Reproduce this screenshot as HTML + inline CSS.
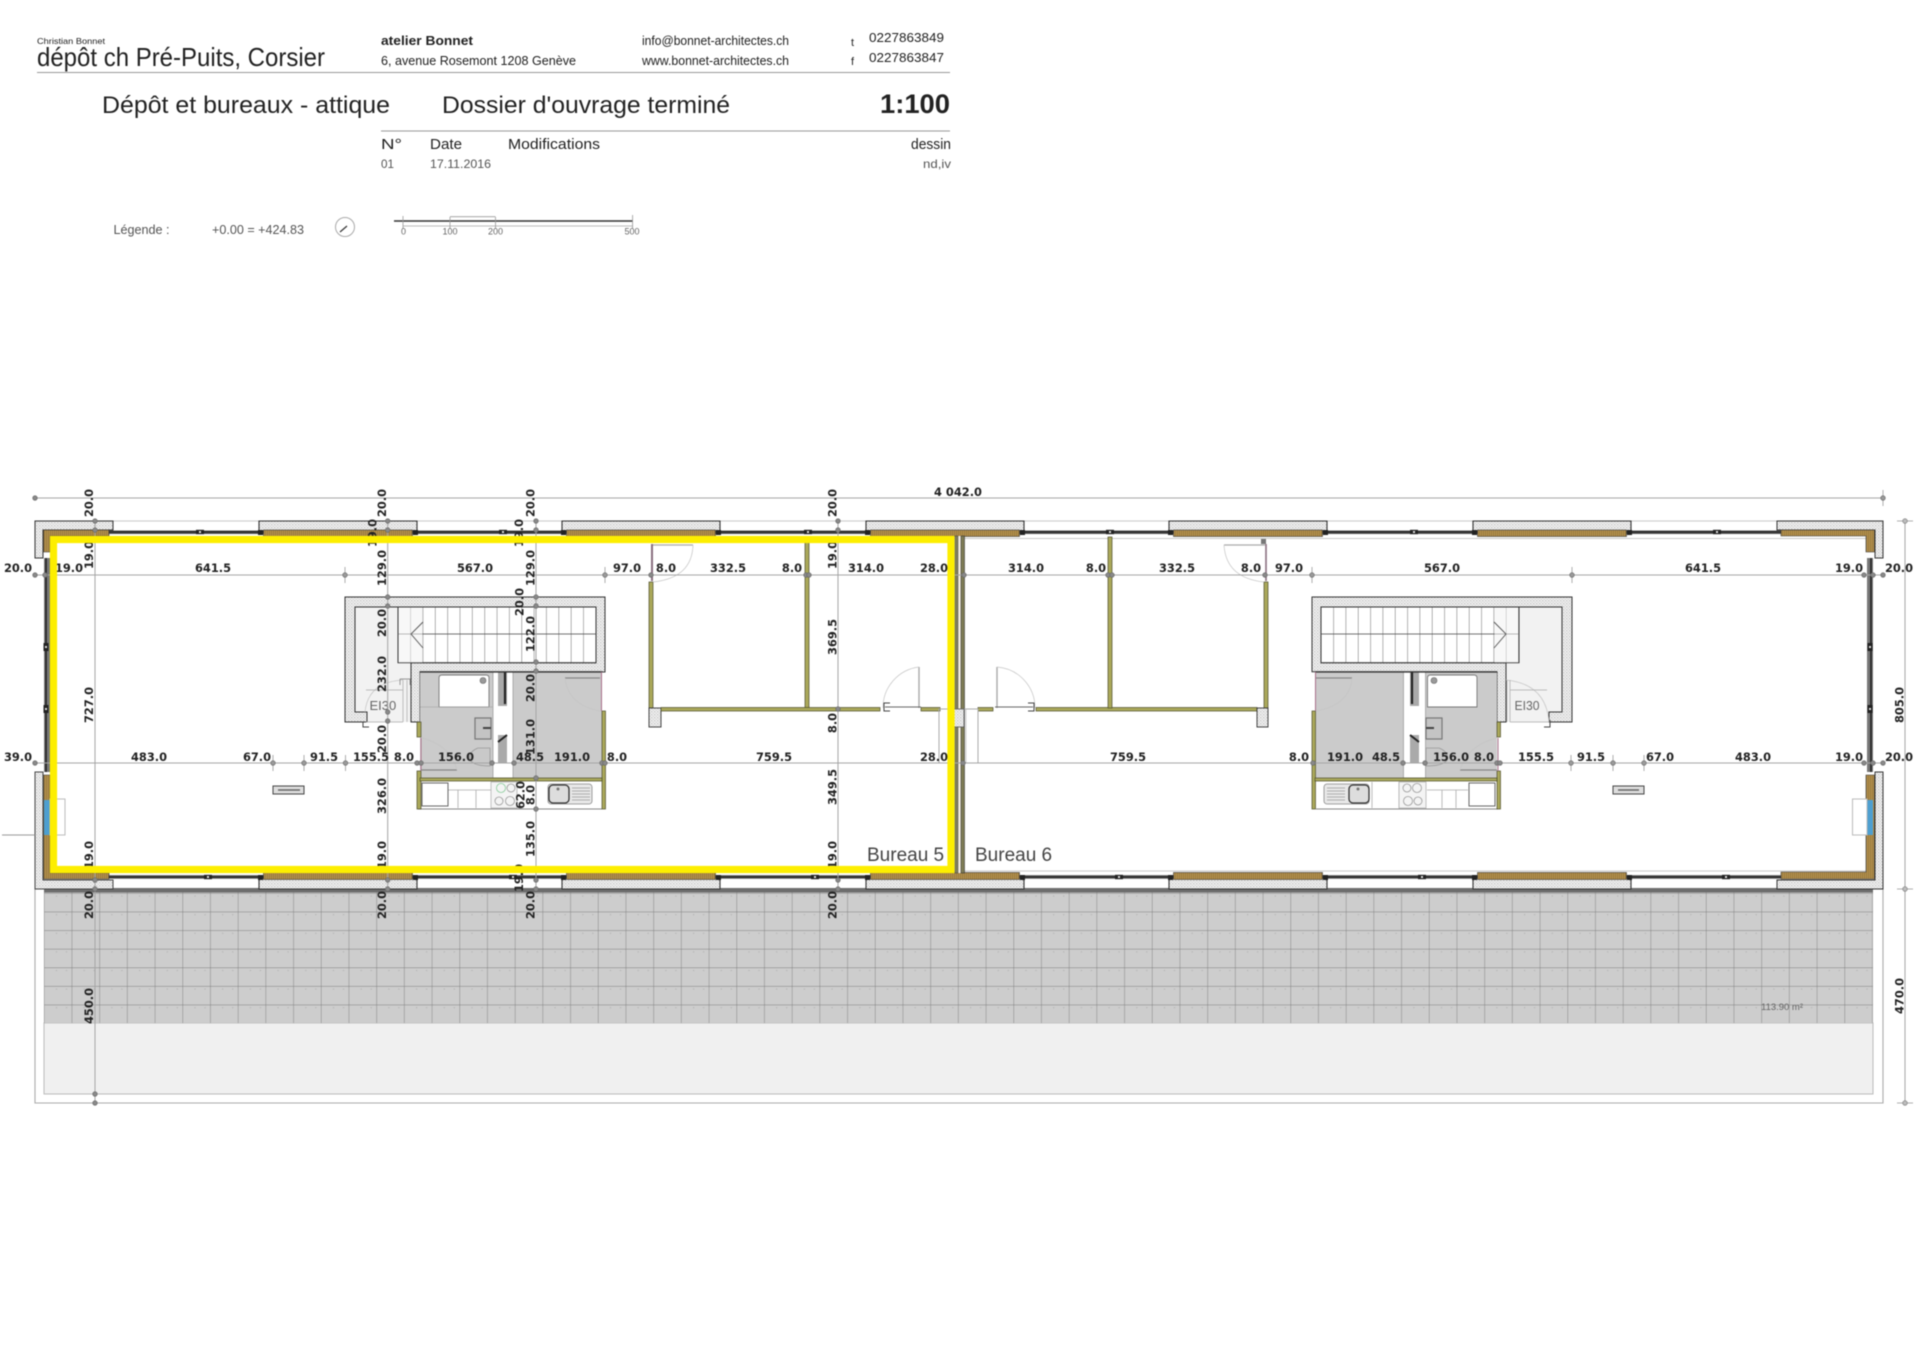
<!DOCTYPE html>
<html lang="fr"><head><meta charset="utf-8"><title>Dépôt ch Pré-Puits, Corsier</title>
<style>
html,body{margin:0;padding:0;background:#fff}
body{width:1920px;height:1357px;overflow:hidden}
svg{display:block;filter:blur(.45px)}
.h{font-family:"Liberation Sans",sans-serif;fill:#222}
.d{font-family:"DejaVu Sans","Liberation Sans",sans-serif;font-weight:700;font-size:11.4px;fill:#222;text-anchor:middle}
.s{font-family:"Liberation Sans",sans-serif;fill:#666}
.l{fill:none;stroke:#a5a5a5;stroke-width:1}
.k{fill:none;stroke:#333;stroke-width:1.1}
.t{fill:none;stroke:#c4c4c4;stroke-width:.7}
.o{fill:#aaa95a;stroke:#4d4d2c;stroke-width:.7}
</style></head><body>
<svg width="1920" height="1357" viewBox="0 0 1920 1357" xmlns="http://www.w3.org/2000/svg">
<defs>
<pattern id="ha" width="3" height="3" patternUnits="userSpaceOnUse"><rect width="3" height="3" fill="#f3f3f3"/><rect width="1.5" height="1.5" fill="#cdcdcd"/><rect x="1.5" y="1.5" width="1.5" height="1.5" fill="#dadada"/></pattern>
<pattern id="br" width="2" height="6" patternUnits="userSpaceOnUse"><rect width="2" height="6" fill="#b8934f"/><rect width=".8" height="6" fill="#8f7238"/></pattern>
<pattern id="pv" x="44" y="893.1" width="27.7" height="18.6" patternUnits="userSpaceOnUse"><path d="M0 0V18.6M0 0H27.7" fill="none" stroke="#7c7c7c" stroke-width=".9"/><rect x="12" y="2.5" width="1" height="1" fill="#aaa"/><rect x="22" y="2.5" width="1" height="1" fill="#aaa"/></pattern>
<pattern id="st" x="398" y="607" width="12.35" height="56" patternUnits="userSpaceOnUse"><path d="M0 0V56" stroke="#444" stroke-width=".8"/></pattern>
<pattern id="st2" x="1321" y="607" width="12.33" height="56" patternUnits="userSpaceOnUse"><path d="M0 0V56" stroke="#444" stroke-width=".8"/></pattern>
<g id="c"><circle r="2.3" fill="#888" stroke="#666" stroke-width=".6"/></g>
<g id="cv"><path d="M0 -8V8" stroke="#999" stroke-width=".8"/><circle r="2.3" fill="#999" stroke="#666" stroke-width=".6"/></g>
<g id="cr"><path d="M-8 0H8" stroke="#999" stroke-width=".8"/><circle r="2.3" fill="#bbb" stroke="#777" stroke-width=".6"/></g>
<g id="m"><rect x="-4" y="-2.2" width="8" height="4.4" fill="#222"/><rect x="-1" y="-1" width="2" height="2" fill="#ddd"/></g>
<g id="mv"><rect x="-2.5" y="-4" width="5" height="8" fill="#222"/><rect x="-1" y="-1" width="2" height="2" fill="#ddd"/></g>
<g id="bt"><rect width="158" height="9.5" y="0" fill="url(#ha)"/><path d="M0 9.5V0H158V9.5" class="k"/><rect x="4.5" y="9" width="149" height="6.5" fill="url(#br)" stroke="#333" stroke-width=".6"/><rect x="-1" y="9" width="5" height="5" fill="#222"/><rect x="154" y="9" width="5" height="5" fill="#222"/></g>
<g id="bb"><rect width="158" height="9" y="0" fill="url(#ha)"/><path d="M0 0V9H158V0" class="k"/><rect x="4.5" y="-7.5" width="149" height="7" fill="url(#br)" stroke="#333" stroke-width=".6"/><rect x="-1" y="-5" width="5" height="5" fill="#222"/><rect x="154" y="-5" width="5" height="5" fill="#222"/></g>
</defs>

<rect width="1920" height="1357" fill="#fff"/>

<!-- HEADER -->
<text class="h" x="37" y="44" font-size="8.5" textLength="68" lengthAdjust="spacingAndGlyphs">Christian Bonnet</text>
<text class="h" x="37" y="66" font-size="26" textLength="288" lengthAdjust="spacingAndGlyphs">dépôt ch Pré-Puits, Corsier</text>
<path d="M37 72.5H950" stroke="#999" stroke-width="1"/>
<text class="h" x="381" y="45" font-size="12.5" font-weight="700" textLength="92" lengthAdjust="spacingAndGlyphs">atelier Bonnet</text>
<text class="h" x="381" y="65" font-size="12.5" textLength="195" lengthAdjust="spacingAndGlyphs" fill="#444">6, avenue Rosemont  1208 Genève</text>
<text class="h" x="642" y="45" font-size="12.5" textLength="147" lengthAdjust="spacingAndGlyphs">info@bonnet-architectes.ch</text>
<text class="h" x="642" y="65" font-size="12.5" textLength="147" lengthAdjust="spacingAndGlyphs">www.bonnet-architectes.ch</text>
<text class="h" x="851" y="46" font-size="11">t</text>
<text class="h" x="851" y="65" font-size="11">f</text>
<text class="h" x="869" y="42" font-size="12.5" textLength="75" lengthAdjust="spacingAndGlyphs">0227863849</text>
<text class="h" x="869" y="62" font-size="12.5" textLength="75" lengthAdjust="spacingAndGlyphs">0227863847</text>
<text class="h" x="102" y="113" font-size="24" textLength="288" lengthAdjust="spacingAndGlyphs">Dépôt et bureaux - attique</text>
<text class="h" x="442" y="113" font-size="24" textLength="288" lengthAdjust="spacingAndGlyphs">Dossier d'ouvrage terminé</text>
<text class="h" x="880" y="113" font-size="27" font-weight="700" textLength="70" lengthAdjust="spacingAndGlyphs">1:100</text>
<path d="M381 131H950" stroke="#999" stroke-width="1"/>
<text class="h" x="381" y="149" font-size="15" textLength="21" lengthAdjust="spacingAndGlyphs">N°</text>
<text class="h" x="430" y="149" font-size="15" textLength="32" lengthAdjust="spacingAndGlyphs">Date</text>
<text class="h" x="508" y="149" font-size="15" textLength="92" lengthAdjust="spacingAndGlyphs">Modifications</text>
<text class="h" x="911" y="149" font-size="15" textLength="40" lengthAdjust="spacingAndGlyphs">dessin</text>
<text class="h" x="381" y="168" font-size="12" textLength="13" lengthAdjust="spacingAndGlyphs" style="fill:#555">01</text>
<text class="h" x="430" y="168" font-size="12" textLength="61" lengthAdjust="spacingAndGlyphs" style="fill:#555">17.11.2016</text>
<text class="h" x="923" y="168" font-size="12" textLength="28" lengthAdjust="spacingAndGlyphs" style="fill:#555">nd,iv</text>
<text class="s" x="113.5" y="234" font-size="12.5" style="fill:#555" textLength="56" lengthAdjust="spacingAndGlyphs">Légende :</text>
<text class="s" x="212" y="234" font-size="12.5" style="fill:#555" textLength="92" lengthAdjust="spacingAndGlyphs">+0.00 = +424.83</text>
<ellipse cx="345" cy="227" rx="9.5" ry="9.5" fill="none" stroke="#aaa" stroke-width="1"/>
<path d="M340 232L347 226" stroke="#333" stroke-width="1.2"/>
<path d="M394 221H632.6" stroke="#333" stroke-width="1.4"/>
<path d="M403 226H632.6" stroke="#bbb" stroke-width="1"/>
<path d="M403 216V229M450 217V229M495.5 217V229M632.6 215V229M450 216.7H495.5" stroke="#999" stroke-width=".8" fill="none"/>
<g class="s" font-size="9" text-anchor="middle" style="fill:#666">
<text x="403.5" y="234.5">0</text><text x="450" y="234.5">100</text><text x="495.5" y="234.5">200</text><text x="632" y="234.5">500</text></g>

<!-- PAVING -->
<rect x="44" y="1023" width="1829" height="71" fill="#f0f0f0" stroke="#bbb" stroke-width="1"/>
<rect x="44" y="892" width="1829" height="131" fill="#cdcdcd"/>
<rect x="44" y="892" width="1829" height="131" fill="url(#pv)"/>
<rect x="44" y="888" width="1829" height="4.5" fill="#6d6d6d"/>
<path d="M35 889V1103H1883V889" fill="none" stroke="#aaa" stroke-width="1.1"/>

<!-- BUILDING WHITE + WINDOW BANDS -->
<path d="M35 521H1883M45 538.5H1870M45 871H1870" stroke="#c8c8c8" stroke-width="1" fill="none"/>
<rect x="50" y="530.5" width="1820" height="3.5" fill="#555"/>
<path d="M50 532H1870" stroke="#222" stroke-width="1.3"/>
<rect x="50" y="875.2" width="1820" height="3.5" fill="#555"/>
<path d="M50 877H1870" stroke="#222" stroke-width="1.3"/>
<rect x="113" y="880" width="146" height="8" fill="#fff"/>
<rect x="417" y="880" width="145" height="8" fill="#fff"/>
<rect x="720" y="880" width="146" height="8" fill="#fff"/>
<rect x="1023" y="880" width="146" height="8" fill="#fff"/>
<rect x="1327" y="880" width="146" height="8" fill="#fff"/>
<rect x="1631" y="880" width="146" height="8" fill="#fff"/>

<!-- top blocks -->
<use href="#bt" x="259" y="521"/><use href="#bt" x="562" y="521"/><use href="#bt" x="866" y="521"/><use href="#bt" x="1169" y="521"/><use href="#bt" x="1473" y="521"/>
<use href="#bb" x="259" y="880"/><use href="#bb" x="562" y="880"/><use href="#bb" x="866" y="880"/><use href="#bb" x="1169" y="880"/><use href="#bb" x="1473" y="880"/>

<!-- left corners -->
<path d="M35 521H113V530H43V558H35Z" fill="url(#ha)" stroke="#333" stroke-width="1"/>
<path d="M43.5 530H109V536H50V552H43.5Z" fill="url(#br)" stroke="#333" stroke-width=".6"/>
<path d="M35 772H43V880H113V889H35Z" fill="url(#ha)" stroke="#444" stroke-width="1"/>
<path d="M43.5 775H50V873H109V879H43.5Z" fill="url(#br)" stroke="#333" stroke-width=".6"/>
<rect x="44" y="800" width="6" height="35" fill="#4d9fd0"/>
<rect x="50" y="799" width="15" height="36" fill="#fff" stroke="#bbb" stroke-width="1"/>
<path d="M2 835H35" stroke="#999" stroke-width=".9"/>
<rect x="44" y="558" width="6" height="214" fill="#777"/>
<path d="M46 558V772" stroke="#222" stroke-width="1.6"/>
<use href="#mv" x="46" y="647"/><use href="#mv" x="46" y="709"/>

<!-- right corners -->
<path d="M1777 521H1883V558H1875V530H1777Z" fill="url(#ha)" stroke="#333" stroke-width="1"/>
<path d="M1781 530H1874.5V552H1866V536H1781Z" fill="url(#br)" stroke="#333" stroke-width=".6"/>
<path d="M1875 772H1883V889H1777V880H1875Z" fill="url(#ha)" stroke="#333" stroke-width="1"/>
<path d="M1866 775H1874.5V879H1781V872H1866Z" fill="url(#br)" stroke="#333" stroke-width=".6"/>
<rect x="1867" y="800" width="6" height="35" fill="#4d9fd0"/>
<rect x="1852.5" y="799" width="14.5" height="36" fill="#fff" stroke="#bbb" stroke-width="1"/>
<rect x="1867" y="558" width="6" height="214" fill="#777"/>
<path d="M1871 558V772" stroke="#222" stroke-width="1.6"/>
<use href="#mv" x="1870" y="647"/><use href="#mv" x="1870" y="709"/>

<!-- mullions -->
<use href="#m" x="200" y="532"/><use href="#m" x="503" y="532"/><use href="#m" x="808" y="532"/><use href="#m" x="1110" y="532"/><use href="#m" x="1414" y="532"/><use href="#m" x="1717" y="532"/>
<use href="#m" x="208" y="877"/><use href="#m" x="513" y="877"/><use href="#m" x="815" y="877"/><use href="#m" x="1119" y="877"/><use href="#m" x="1422" y="877"/><use href="#m" x="1726" y="877"/>

<!-- LEFT CORE -->
<rect x="355" y="607" width="65" height="115" fill="#f2f2f2"/>
<path d="M345 597H605V672H602V671.7H420V722H411V662.7H596V607H355V712H367V722H345Z" fill="url(#ha)" stroke="#333" stroke-width="1"/>
<rect x="398" y="607" width="198" height="55.7" fill="#fff"/>
<rect x="398" y="607" width="198" height="55.7" fill="url(#st)"/>
<rect x="398" y="607" width="198" height="55.7" fill="none" stroke="#333" stroke-width="1"/>
<path d="M398 634H596" stroke="#444" stroke-width=".8"/>
<rect x="398.5" y="607.5" width="24" height="55" fill="#f2f2f2" fill-opacity=".55"/>
<path d="M423 622L411 634L423 648" fill="none" stroke="#555" stroke-width=".9"/>
<rect x="420" y="671.7" width="182" height="106.5" fill="#cbcbcb"/>
<path d="M439 707V678Q439 675 442 675H486Q489 675 489 678V707Z" fill="#fff" stroke="#777" stroke-width=".9"/>
<circle cx="483" cy="680.5" r="3" fill="#999" stroke="#666" stroke-width=".6"/>
<rect x="493" y="672" width="20" height="106" fill="#fff" stroke="#888" stroke-width=".6"/>
<path d="M498 672H507V706H498Z" fill="#aaa"/><path d="M505 672V704" stroke="#222" stroke-width="2.2"/>
<path d="M498 735H507V763H498Z" fill="#aaa"/><path d="M498 742L507 735" stroke="#222" stroke-width="2"/>
<rect x="475" y="718" width="16" height="21" fill="#c4c4c4" stroke="#777" stroke-width="1.2"/>
<rect x="483" y="727" width="8" height="2" fill="#444"/>
<path d="M490 748H478Q468 752 470 760Q474 766 490 766Z" fill="#c9c9c9" stroke="#999" stroke-width=".8"/>
<path d="M420 672H602" stroke="#333" stroke-width="1.2"/>
<path d="M429 707H493M439 707H420" stroke="#aaa" stroke-width=".7"/>
<!-- kitchen -->
<rect x="418" y="781" width="187" height="28" fill="#fff"/>
<path d="M418 809H602" stroke="#888" stroke-width="1"/>
<path d="M448 790H491M476 790V808" stroke="#aaa" stroke-width=".8"/><path d="M458 790V808" stroke="#aaa" stroke-width=".8" fill="none"/>
<rect x="422" y="783" width="26" height="23" fill="#fff" stroke="#666" stroke-width="1"/>
<rect x="491" y="782" width="26" height="26" fill="#f4f4f4" stroke="#aaa" stroke-width=".7"/>
<g fill="none" stroke="#999" stroke-width=".8"><circle cx="501" cy="788" r="4.5" stroke="#8c9" /><circle cx="511" cy="788" r="4"/><circle cx="499" cy="801" r="4"/><circle cx="510" cy="801" r="4.5"/></g>
<rect x="548" y="784" width="44" height="20" rx="3" fill="#e8e8e8" stroke="#888" stroke-width=".8"/>
<rect x="549" y="785" width="20" height="18" rx="4" fill="#ddd" stroke="#333" stroke-width="1.3"/>
<circle cx="558" cy="789" r="1.5" fill="#777"/>
<path d="M572 788H590M572 791H590M572 794H590M572 797H590M572 800H590" stroke="#999" stroke-width=".7"/>
<!-- walls core -->
<rect x="417" y="722" width="4" height="15" class="o"/><rect x="417" y="771" width="4" height="38" class="o"/>
<rect x="602" y="711" width="3.5" height="98" class="o"/>
<rect x="420" y="778" width="182" height="3" class="o"/>
<path d="M421 738V771" stroke="#a8708a" stroke-width="1"/><path d="M601.5 672V711" stroke="#a8708a" stroke-width="1"/>
<path d="M421 770H457" stroke="#888" stroke-width="1.2"/><path d="M565 678H600" stroke="#888" stroke-width="1.2"/>
<path d="M422 738Q450 745 457 770" class="t"/><path d="M565 678Q568 705 600 711" class="t"/>
<!-- EI30 door left -->
<path d="M365 712Q368 682 403 680" class="t"/>
<path d="M403 680V722M407 680V722M366 690H403M366 722H403" stroke="#aaa" stroke-width=".7" fill="none"/>
<path d="M400 679H410V685M400 679V685" fill="none" stroke="#777" stroke-width=".7"/>
<path d="M363 722V727H369" fill="none" stroke="#444" stroke-width="1"/>
<text class="s" x="369.5" y="710" font-size="13">EI30</text>

<!-- RIGHT CORE -->
<rect x="1497" y="607" width="65" height="115" fill="#f2f2f2"/>
<path d="M1312 597H1572V722H1549V712H1562V607H1321V662.7H1506V722H1497V671.7H1312Z" fill="url(#ha)" stroke="#333" stroke-width="1"/>
<rect x="1321" y="607" width="198" height="55.7" fill="#fff"/>
<rect x="1321" y="607" width="198" height="55.7" fill="url(#st2)"/>
<rect x="1321" y="607" width="198" height="55.7" fill="none" stroke="#333" stroke-width="1"/>
<path d="M1321 634H1519" stroke="#444" stroke-width=".8"/>
<rect x="1494.5" y="607.5" width="24" height="55" fill="#f2f2f2" fill-opacity=".55"/>
<path d="M1494 622L1506 634L1494 648" fill="none" stroke="#555" stroke-width=".9"/>
<rect x="1315" y="671.7" width="182" height="106.5" fill="#cbcbcb"/>
<path d="M1427.5 707V678Q1427.5 675 1430.5 675H1474Q1477 675 1477 678V707Z" fill="#fff" stroke="#777" stroke-width=".9"/>
<circle cx="1434" cy="680.5" r="3" fill="#999" stroke="#666" stroke-width=".6"/>
<rect x="1403.5" y="672" width="22" height="106" fill="#fff" stroke="#888" stroke-width=".6"/>
<path d="M1410 672H1419V706H1410Z" fill="#aaa"/><path d="M1412 672V704" stroke="#222" stroke-width="2.2"/>
<path d="M1410 735H1419V763H1410Z" fill="#aaa"/><path d="M1419 742L1410 735" stroke="#222" stroke-width="2"/>
<rect x="1426" y="718" width="16" height="21" fill="#c4c4c4" stroke="#777" stroke-width="1.2"/>
<rect x="1426" y="727" width="8" height="2" fill="#444"/>
<path d="M1426 748H1439Q1449 752 1447 760Q1443 766 1426 766Z" fill="#c9c9c9" stroke="#999" stroke-width=".8"/>
<path d="M1315 672H1497" stroke="#333" stroke-width="1.2"/>
<rect x="1314" y="781" width="186" height="28" fill="#fff"/>
<path d="M1316 809H1498" stroke="#888" stroke-width="1"/>
<path d="M1427 790H1468M1442 790V808M1456 790V808M1372 782V808M1399 782V808" stroke="#aaa" stroke-width=".8"/>
<rect x="1469" y="783" width="26" height="23" fill="#fff" stroke="#666" stroke-width="1"/>
<rect x="1399" y="782" width="27" height="26" fill="#f4f4f4" stroke="#aaa" stroke-width=".7"/>
<g fill="none" stroke="#999" stroke-width=".8"><circle cx="1407" cy="788" r="4"/><circle cx="1417" cy="788" r="4.5"/><circle cx="1408" cy="801" r="4.5"/><circle cx="1418" cy="801" r="4"/></g>
<rect x="1324" y="784" width="45" height="20" rx="3" fill="#e8e8e8" stroke="#888" stroke-width=".8"/>
<rect x="1349" y="785" width="20" height="18" rx="4" fill="#ddd" stroke="#333" stroke-width="1.3"/>
<circle cx="1358" cy="789" r="1.5" fill="#777"/>
<path d="M1327 788H1345M1327 791H1345M1327 794H1345M1327 797H1345M1327 800H1345" stroke="#999" stroke-width=".7"/>
<rect x="1312" y="711" width="3.5" height="98" class="o"/>
<rect x="1497" y="722" width="3.5" height="15" class="o"/><rect x="1497" y="771" width="3.5" height="38" class="o"/>
<rect x="1315" y="778" width="182" height="3" class="o"/>
<path d="M1315.5 672V711" stroke="#a8708a" stroke-width="1"/><path d="M1498 738V771" stroke="#a8708a" stroke-width="1"/>
<path d="M1316 678H1352" stroke="#888" stroke-width="1.2"/><path d="M1460 770H1497" stroke="#888" stroke-width="1.2"/>
<path d="M1352 678Q1350 705 1316 711" class="t"/><path d="M1497 738Q1468 745 1460 770" class="t"/>
<path d="M1506 680Q1546 684 1549 722" class="t"/>
<path d="M1507 680V722M1510 680V722M1510 690H1547M1510 722H1549" stroke="#aaa" stroke-width=".7" fill="none"/>
<path d="M1544 727H1550V720" fill="none" stroke="#444" stroke-width="1"/>
<text class="s" x="1514.5" y="710" font-size="13" textLength="25" lengthAdjust="spacingAndGlyphs">EI30</text>

<!-- PARTITIONS -->
<rect x="649" y="582" width="4" height="126" class="o"/>
<rect x="805" y="537" width="4" height="171" class="o"/>
<rect x="649" y="708" width="12" height="19" fill="url(#ha)" stroke="#333" stroke-width=".9"/>
<rect x="661" y="707.5" width="219" height="3.5" class="o"/>
<rect x="921" y="707.5" width="19" height="3.5" class="o"/>
<rect x="978" y="707.5" width="15" height="3.5" class="o"/>
<rect x="1036" y="707.5" width="221" height="3.5" class="o"/>
<rect x="1108" y="537" width="4" height="171" class="o"/>
<rect x="1264" y="582" width="4" height="126" class="o"/>
<rect x="1257" y="708" width="11" height="19" fill="url(#ha)" stroke="#333" stroke-width=".9"/>
<!-- top swing doors -->
<path d="M652 544V581" stroke="#8a6f7f" stroke-width="2"/><path d="M653 545H693" stroke="#aaa" stroke-width="1.2"/><path d="M693 545Q692 578 653 582" class="t"/>
<path d="M1266 544V581" stroke="#8a6f7f" stroke-width="1.6"/><path d="M1224 545H1265" stroke="#aaa" stroke-width="1.2"/><path d="M1224 545Q1226 578 1264 582" class="t"/>
<rect x="1261" y="539" width="5" height="5" fill="#777"/>
<!-- centre wall -->
<rect x="958" y="536" width="3" height="337" fill="#f6f0e2"/>
<rect x="955" y="536" width="3" height="337" fill="#807f5a" stroke="#444" stroke-width=".5"/>
<rect x="961" y="536" width="3.5" height="337" fill="#7f7d55" stroke="#333" stroke-width=".6"/>
<rect x="939" y="709" width="39" height="54" fill="none" stroke="#aaa" stroke-width="1"/>
<path d="M948 709V763M966 709V763" stroke="#bbb" stroke-width=".7"/>
<rect x="953" y="709" width="11" height="18" fill="url(#ha)" stroke="#555" stroke-width=".8"/>
<!-- centre doors -->
<path d="M919 667V708M997 667V708" stroke="#aaa" stroke-width="1.4"/>
<path d="M883 708A41 41 0 0 1 919 667M997 667A41 41 0 0 1 1035 708" class="t"/>
<path d="M885 707H921M995 707H1033" stroke="#666" stroke-width="1.1"/>
<path d="M890 703H884V711H890M1028 703H1034V711H1028" fill="none" stroke="#444" stroke-width="1"/>
<!-- vents -->
<rect x="273" y="786" width="31" height="8" fill="#ddd" stroke="#444" stroke-width="1"/><path d="M278 790H300" stroke="#666" stroke-width="1.5"/>
<rect x="1613" y="786" width="31" height="8" fill="#ddd" stroke="#444" stroke-width="1"/><path d="M1618 790H1639" stroke="#666" stroke-width="1.5"/>

<!-- DIMENSION LINES -->
<path d="M35 498H1883" class="l" stroke-width="1.2"/>
<path d="M35 575H1883M35 763H1883" class="l"/>
<path d="M95 521V1103M387.7 521V889M536 521V889M838 521V889M1905 521V1103" class="l"/>
<use href="#c" x="35" y="498"/><use href="#cv" x="1883" y="498"/>
<use href="#cr" x="1905" y="521"/><use href="#cr" x="1905" y="889"/><use href="#cr" x="1905" y="1103"/>
<use href="#c" x="95" y="521"/><use href="#c" x="95" y="530"/><use href="#c" x="95" y="880"/><use href="#c" x="95" y="889"/><use href="#c" x="95" y="1094"/><use href="#c" x="95" y="1103"/>
<use href="#c" x="387.7" y="521"/><use href="#c" x="387.7" y="530"/><use href="#c" x="387.7" y="597"/><use href="#c" x="387.7" y="606"/><use href="#c" x="387.7" y="712"/><use href="#c" x="387.7" y="721"/><use href="#c" x="387.7" y="880"/><use href="#c" x="387.7" y="889"/>
<use href="#c" x="536" y="521"/><use href="#c" x="536" y="530"/><use href="#c" x="536" y="597"/><use href="#c" x="536" y="606"/><use href="#c" x="536" y="662"/><use href="#c" x="536" y="671"/><use href="#c" x="536" y="778"/><use href="#c" x="536" y="809"/><use href="#c" x="536" y="880"/><use href="#c" x="536" y="889"/>
<use href="#c" x="838" y="521"/><use href="#c" x="838" y="530"/><use href="#c" x="838" y="709"/><use href="#c" x="838" y="880"/><use href="#c" x="838" y="889"/>
<use href="#c" x="35" y="575"/><use href="#c" x="45" y="575"/><use href="#cv" x="345" y="575"/><use href="#cv" x="605" y="575"/><use href="#c" x="651" y="575"/><use href="#c" x="806" y="575"/><use href="#c" x="809" y="575"/><use href="#c" x="964" y="575"/><use href="#c" x="1108" y="575"/><use href="#c" x="1112" y="575"/><use href="#c" x="1265" y="575"/><use href="#cv" x="1312" y="575"/><use href="#cv" x="1572" y="575"/><use href="#c" x="1864" y="575"/><use href="#c" x="1873" y="575"/><use href="#c" x="1883" y="575"/>
<use href="#c" x="35" y="763"/><use href="#cv" x="273" y="763"/><use href="#cv" x="304" y="763"/><use href="#cv" x="345.5" y="763"/><use href="#c" x="417" y="763"/><use href="#c" x="421" y="763"/><use href="#c" x="492" y="763"/><use href="#c" x="514" y="763"/><use href="#c" x="602" y="763"/><use href="#c" x="605" y="763"/><use href="#c" x="963" y="763"/><use href="#c" x="1313" y="763"/><use href="#c" x="1403" y="763"/><use href="#c" x="1425" y="763"/><use href="#c" x="1497" y="763"/><use href="#c" x="1500" y="763"/><use href="#cv" x="1571" y="763"/><use href="#cv" x="1613" y="763"/><use href="#cv" x="1644" y="763"/><use href="#c" x="1864" y="763"/><use href="#c" x="1873" y="763"/><use href="#c" x="1883" y="763"/>

<!-- DIM TEXT -->
<g class="d">
<text class="d" x="958" y="496">4 042.0</text>
<text class="d" x="18" y="572">20.0</text><text class="d" x="69" y="572">19.0</text><text class="d" x="213" y="572">641.5</text><text class="d" x="475" y="572">567.0</text><text class="d" x="627" y="572">97.0</text><text class="d" x="666" y="572">8.0</text><text class="d" x="728" y="572">332.5</text><text class="d" x="792" y="572">8.0</text><text class="d" x="866" y="572">314.0</text><text class="d" x="934" y="572">28.0</text><text class="d" x="1026" y="572">314.0</text><text class="d" x="1096" y="572">8.0</text><text class="d" x="1177" y="572">332.5</text><text class="d" x="1251" y="572">8.0</text><text class="d" x="1289" y="572">97.0</text><text class="d" x="1442" y="572">567.0</text><text class="d" x="1703" y="572">641.5</text><text class="d" x="1849" y="572">19.0</text><text class="d" x="1899" y="572">20.0</text>
<text class="d" x="18" y="761">39.0</text><text class="d" x="149" y="761">483.0</text><text class="d" x="257" y="761">67.0</text><text class="d" x="324" y="761">91.5</text><text class="d" x="371" y="761">155.5</text><text class="d" x="404" y="761">8.0</text><text class="d" x="456" y="761">156.0</text><text class="d" x="530" y="761">48.5</text><text class="d" x="572" y="761">191.0</text><text class="d" x="617" y="761">8.0</text><text class="d" x="774" y="761">759.5</text><text class="d" x="934" y="761">28.0</text><text class="d" x="1128" y="761">759.5</text><text class="d" x="1299" y="761">8.0</text><text class="d" x="1345" y="761">191.0</text><text class="d" x="1386" y="761">48.5</text><text class="d" x="1451" y="761">156.0</text><text class="d" x="1484" y="761">8.0</text><text class="d" x="1536" y="761">155.5</text><text class="d" x="1591" y="761">91.5</text><text class="d" x="1660" y="761">67.0</text><text class="d" x="1753" y="761">483.0</text><text class="d" x="1849" y="761">19.0</text><text class="d" x="1899" y="761">20.0</text>
<text class="d" transform="translate(93,503) rotate(-90)">20.0</text>
<text class="d" transform="translate(93,555) rotate(-90)">19.0</text>
<text class="d" transform="translate(93,705) rotate(-90)">727.0</text>
<text class="d" transform="translate(93,855) rotate(-90)">19.0</text>
<text class="d" transform="translate(93,905) rotate(-90)">20.0</text>
<text class="d" transform="translate(93,1006) rotate(-90)">450.0</text>
<text class="d" transform="translate(386,503) rotate(-90)">20.0</text>
<text class="d" transform="translate(376.5,533) rotate(-90)">19.0</text>
<text class="d" transform="translate(386,568) rotate(-90)">129.0</text>
<text class="d" transform="translate(386,623) rotate(-90)">20.0</text>
<text class="d" transform="translate(386,674) rotate(-90)">232.0</text>
<text class="d" transform="translate(386,739) rotate(-90)">20.0</text>
<text class="d" transform="translate(386,796) rotate(-90)">326.0</text>
<text class="d" transform="translate(386,855) rotate(-90)">19.0</text>
<text class="d" transform="translate(386,905) rotate(-90)">20.0</text>
<text class="d" transform="translate(534.5,503) rotate(-90)">20.0</text>
<text class="d" transform="translate(523,533) rotate(-90)">19.0</text>
<text class="d" transform="translate(534.5,568) rotate(-90)">129.0</text>
<text class="d" transform="translate(523.5,602) rotate(-90)">20.0</text>
<text class="d" transform="translate(534.5,634) rotate(-90)">122.0</text>
<text class="d" transform="translate(534.5,688) rotate(-90)">20.0</text>
<text class="d" transform="translate(534.5,737) rotate(-90)">131.0</text>
<text class="d" transform="translate(524.5,795) rotate(-90)">62.0</text>
<text class="d" transform="translate(534.5,795) rotate(-90)">8.0</text>
<text class="d" transform="translate(534.5,839) rotate(-90)">135.0</text>
<text class="d" transform="translate(523,878) rotate(-90)">19.0</text>
<text class="d" transform="translate(534.5,905) rotate(-90)">20.0</text>
<text class="d" transform="translate(836.5,503) rotate(-90)">20.0</text>
<text class="d" transform="translate(836.5,555) rotate(-90)">19.0</text>
<text class="d" transform="translate(836.5,637) rotate(-90)">369.5</text>
<text class="d" transform="translate(836.5,723) rotate(-90)">8.0</text>
<text class="d" transform="translate(836.5,787) rotate(-90)">349.5</text>
<text class="d" transform="translate(836.5,855) rotate(-90)">19.0</text>
<text class="d" transform="translate(836.5,905) rotate(-90)">20.0</text>
<text class="d" transform="translate(1903.5,705) rotate(-90)">805.0</text>
<text class="d" transform="translate(1903.5,996) rotate(-90)">470.0</text>
</g>

<!-- labels -->
<text class="s" x="867" y="861" font-size="19" style="fill:#444">Bureau 5</text>
<text class="s" x="975" y="861" font-size="19" style="fill:#444">Bureau 6</text>
<text class="s" x="1761" y="1010" font-size="9.5" textLength="42" lengthAdjust="spacingAndGlyphs" style="fill:#666">113.90 m²</text>

<!-- YELLOW OUTLINE -->
<rect x="53.5" y="539.5" width="897.5" height="330" fill="none" stroke="#fdee00" stroke-width="7.2"/>
</svg>
</body></html>
